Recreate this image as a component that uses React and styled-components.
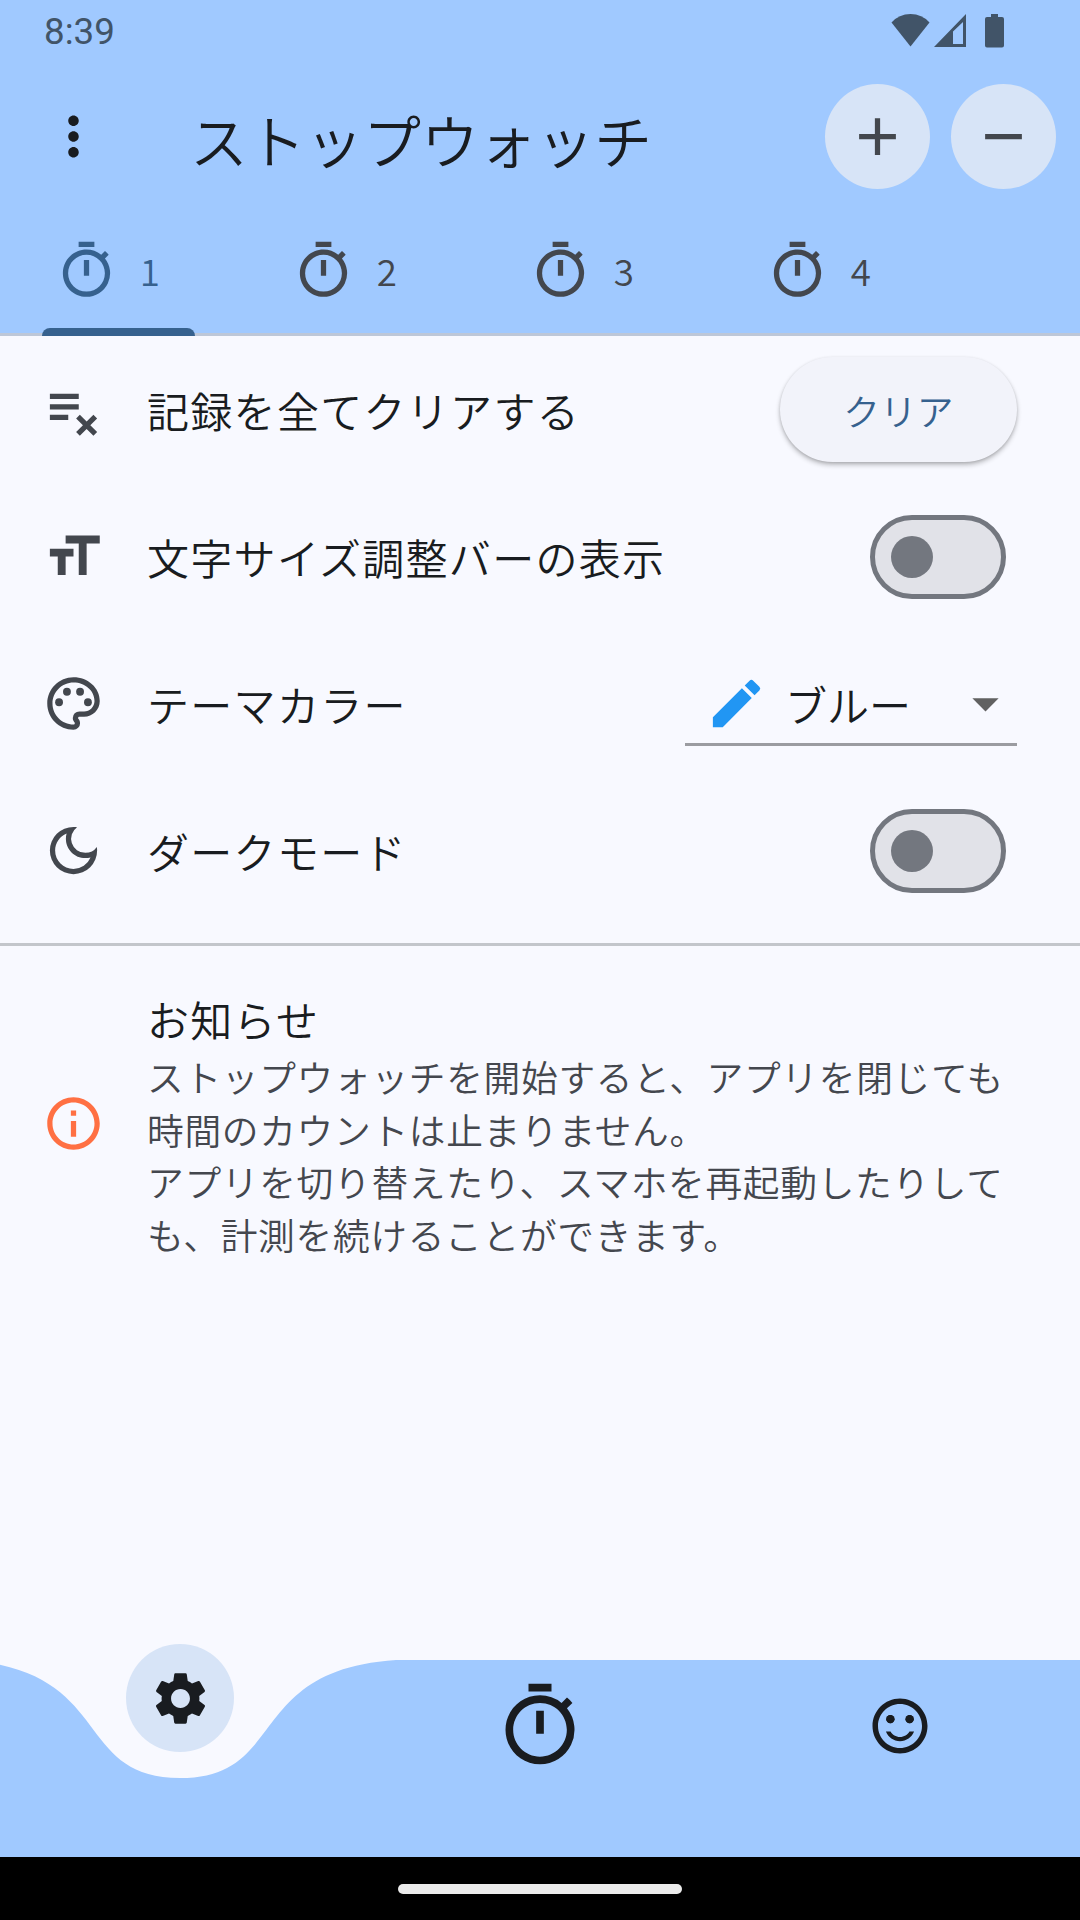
import React from "react";
import styled, { createGlobalStyle } from "styled-components";
import {
  MdAdd,
  MdArrowDropDown,
  MdEdit,
  MdFormatSize,
  MdInfoOutline,
  MdMoreVert,
  MdOutlineDarkMode,
  MdOutlinePalette,
  MdOutlineTimer,
  MdPlaylistRemove,
  MdRemove,
  MdSentimentSatisfiedAlt,
  MdSettings,
} from "react-icons/md";

const color = {
  bar: "#a0c9ff",
  surface: "#f8f9ff",
  tonal: "#d7e4f7",
  primary: "#36618e",
  text: "#191c20",
  muted: "#43474e",
  outline: "#73777f",
};

const GlobalStyle = createGlobalStyle`
  * { box-sizing: border-box; }
  body {
    margin: 0;
    background: ${color.surface};
    font-family: "Noto Sans CJK JP", "Noto Sans", sans-serif;
    font-weight: 350;
    color: ${color.text};
  }
`;

const Screen = styled.div`
  width: 1080px;
  height: 1920px;
  display: flex;
  flex-direction: column;
  overflow: hidden;
  background: ${color.surface};
`;

const Header = styled.header`
  height: 336px;
  flex: none;
  background: ${color.bar};
  border-bottom: 3px solid #bdc7d8;
`;

const StatusBar = styled.div`
  height: 63px;
  display: flex;
  justify-content: space-between;
  align-items: flex-start;
  padding: 10px 73px 0 44px;
  color: #415468;
  font-family: Roboto, sans-serif;
  font-weight: 400;
  font-size: 36.75px;
  line-height: 43px;
`;

const StatusIcons = styled.svg`
  display: block;
  width: 116px;
  height: 36px;
  margin-top: 3px;
`;

const AppBar = styled.div`
  height: 147px;
  display: flex;
  align-items: center;
  padding: 0 24px 0 42px;
`;

const Title = styled.h1`
  margin: 5px 0 0 85px;
  flex: 1;
  font-size: 57.75px;
  font-weight: 350;
  line-height: 73px;
`;

const RoundButtons = styled.div`
  display: flex;
  gap: 21px;
`;

const RoundButton = styled.button`
  width: 105px;
  height: 105px;
  padding: 0;
  border: 0;
  border-radius: 50%;
  display: flex;
  align-items: center;
  justify-content: center;
  background: ${color.tonal};
  color: ${color.muted};
`;

const Tabs = styled.nav`
  height: 126px;
  display: flex;
`;

const Tab = styled.div`
  width: 237px;
  padding: 0 42px;
  color: ${(p) => (p.$active ? color.primary : color.muted)};
`;

const TabInner = styled.div`
  height: 126px;
  display: flex;
  flex-direction: column;
`;

const TabLabel = styled.div`
  height: 118px;
  display: flex;
  align-items: center;
  gap: 21.5px;
  padding: 2px 0 0 13.3px;
  font-size: 36.75px;
  line-height: 52px;
`;

const Indicator = styled.div`
  height: 8px;
  border-radius: 8px 8px 0 0;
  background: ${color.primary};
`;

const Main = styled.main`
  flex: 1;
`;

const Row = styled.div`
  min-height: 147px;
  display: flex;
  align-items: center;
  gap: 42px;
  padding: 21px 63px 21px 42px;
`;

const SettingRow = styled(Row)`
  height: 147px;
  padding-top: 0;
  padding-bottom: 0;
`;

const Leading = styled.span`
  display: flex;
  flex: none;
  color: ${(p) => p.$color || color.muted};
`;

const Label = styled.div`
  flex: 1;
  font-size: 42px;
  letter-spacing: 1.3px;
  line-height: 63px;
`;

const ClearButton = styled.button`
  width: 237px;
  height: 105px;
  padding: 0;
  border: 0;
  border-radius: 53px;
  background: #f2f3fa;
  color: ${color.primary};
  font: inherit;
  font-size: 36.75px;
  line-height: 52px;
  box-shadow: 0 3px 5px rgba(0, 0, 0, 0.24), 0 1px 3px rgba(0, 0, 0, 0.12);
`;

const Toggle = styled.span`
  width: 136px;
  height: 84px;
  margin-right: 11px;
  display: flex;
  align-items: center;
  padding-left: 15.75px;
  border: 5.25px solid ${color.outline};
  border-radius: 42px;
  background: #e1e2e8;
`;

const Thumb = styled.span`
  width: 42px;
  height: 42px;
  border-radius: 50%;
  background: ${color.outline};
`;

const Select = styled.div`
  width: 332px;
  height: 85px;
  display: flex;
  align-items: center;
  padding: 2px 0 0 20px;
  border-bottom: 3px solid #9b9ca1;
`;

const SelectText = styled.span`
  flex: 1;
  padding-left: 17px;
  font-size: 42px;
  line-height: 63px;
`;

const Divider = styled.hr`
  height: 3px;
  margin: 19px 0 20px;
  border: 0;
  background: #c3c6cb;
`;

const Notice = styled.div`
  flex: 1;
`;

const NoticeText = styled.p`
  margin: 0;
  color: #44474e;
  font-size: 36.75px;
  letter-spacing: 0.65px;
  line-height: 52.5px;
  white-space: nowrap;
`;

const BottomBar = styled.nav`
  position: relative;
  height: 197px;
  flex: none;
  display: grid;
  grid-template-columns: repeat(3, 1fr);
`;

const Wave = styled.svg`
  position: absolute;
  inset: 0;
  width: 1080px;
  height: 197px;
`;

const NavItem = styled.div`
  position: relative;
  height: 132px;
  display: flex;
  align-items: center;
  justify-content: center;
  color: #191c20;
`;

const ActiveItem = styled(NavItem)`
  height: 108px;
  margin-top: -16px;
`;

const ActiveDisc = styled.span`
  width: 108px;
  height: 108px;
  border-radius: 50%;
  display: flex;
  align-items: center;
  justify-content: center;
  background: ${color.tonal};
`;

const GestureBar = styled.div`
  height: 63px;
  flex: none;
  display: flex;
  justify-content: center;
  padding-top: 27px;
  background: #000;
`;

const Handle = styled.span`
  width: 284px;
  height: 10px;
  border-radius: 5px;
  background: #ebebeb;
`;

const ICON = 63;

function Setting({ icon, label, children }) {
  return (
    <SettingRow>
      <Leading>{icon}</Leading>
      <Label>{label}</Label>
      {children}
    </SettingRow>
  );
}

export default function App() {
  return (
    <>
      <GlobalStyle />
      <Screen>
        <Header>
          <StatusBar>
            <span>8:39</span>
            <StatusIcons viewBox="0 0 116 36" fill="currentColor">
              <path d="M.5 9.500Q8 1 19.500 1T38.500 9.500L19.500 33.500Z" />
              <path
                fillRule="evenodd"
                d="M43 34L75 1V34ZM62 18.500V31H72V9Z"
              />
              <path d="M100 1h7v3h4q2 0 2 2v26.500q0 2-2 2H96q-2 0-2-2V6q0-2 2-2h4z" />
            </StatusIcons>
          </StatusBar>
          <AppBar>
            <MdMoreVert size={ICON} />
            <Title>ストップウォッチ</Title>
            <RoundButtons>
              <RoundButton>
                <MdAdd size={ICON} />
              </RoundButton>
              <RoundButton>
                <MdRemove size={ICON} />
              </RoundButton>
            </RoundButtons>
          </AppBar>
          <Tabs>
            {[1, 2, 3, 4].map((n) => (
              <Tab key={n} $active={n === 1}>
                <TabInner>
                  <TabLabel>
                    <MdOutlineTimer size={ICON} />
                    <span>{n}</span>
                  </TabLabel>
                  {n === 1 && <Indicator />}
                </TabInner>
              </Tab>
            ))}
          </Tabs>
        </Header>

        <Main>
          <Setting icon={<MdPlaylistRemove size={ICON} />} label="記録を全てクリアする">
            <ClearButton>クリア</ClearButton>
          </Setting>
          <Setting icon={<MdFormatSize size={ICON} />} label="文字サイズ調整バーの表示">
            <Toggle>
              <Thumb />
            </Toggle>
          </Setting>
          <Setting icon={<MdOutlinePalette size={ICON} />} label="テーマカラー">
            <Select>
              <MdEdit size={ICON} color="#2196f3" />
              <SelectText>ブルー</SelectText>
              <MdArrowDropDown size={ICON} color="#616161" />
            </Select>
          </Setting>
          <Setting icon={<MdOutlineDarkMode size={ICON} />} label="ダークモード">
            <Toggle>
              <Thumb />
            </Toggle>
          </Setting>
          <Divider />
          <Row>
            <Leading $color="#ff7043">
              <MdInfoOutline size={ICON} />
            </Leading>
            <Notice>
              <Label>お知らせ</Label>
              <NoticeText>
                ストップウォッチを開始すると、アプリを閉じても
                <br />
                時間のカウントは止まりません。
                <br />
                アプリを切り替えたり、スマホを再起動したりして
                <br />
                も、計測を続けることができます。
              </NoticeText>
            </Notice>
          </Row>
        </Main>

        <BottomBar>
          <Wave viewBox="0 0 1080 197">
            <path
              fill={color.bar}
              d="M-36 0C115.200 9.840 72 118.100 180 118.100S244.800 9.840 396 0H1080V197H-36Z"
            />
          </Wave>
          <ActiveItem>
            <ActiveDisc>
              <MdSettings size={ICON} />
            </ActiveDisc>
          </ActiveItem>
          <NavItem>
            <MdOutlineTimer size={92} />
          </NavItem>
          <NavItem>
            <MdSentimentSatisfiedAlt size={66} />
          </NavItem>
        </BottomBar>
        <GestureBar>
          <Handle />
        </GestureBar>
      </Screen>
    </>
  );
}
